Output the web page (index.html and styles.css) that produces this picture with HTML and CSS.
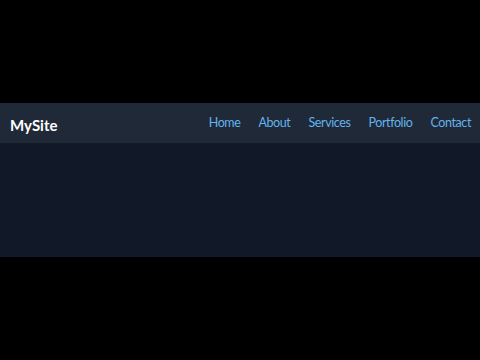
FILE: index.html
```html
<!DOCTYPE html>
<html>
<head>
<meta charset="utf-8">
<link rel="stylesheet" href="styles.css">
</head>
<body>
<div class="page">
  <div class="frame">
    <header class="header">
      <div class="logo">MySite</div>
      <nav class="nav">
        <a class="link">Home</a>
        <a class="link">About</a>
        <a class="link">Services</a>
        <a class="link">Portfolio</a>
        <a class="link">Contact</a>
      </nav>
    </header>
    <main class="content"></main>
  </div>
</div>
</body>
</html>
```
FILE: styles.css
```css
html, body {
  margin: 0;
  padding: 0;
  background: #000;
  width: 480px;
  height: 360px;
  overflow: hidden;
}
.page {
  height: 360px;
  display: flex;
  align-items: center;
}
.frame {
  width: 480px;
  height: 154px;
  display: flex;
  flex-direction: column;
  background: #111827;
}
.header {
  height: 40px;
  background: #1f2937;
  display: flex;
  align-items: center;
  justify-content: space-between;
  padding: 0 9px 0 10px;
  font-family: Lato, "Noto Sans", sans-serif;
}
.logo {
  color: #fff;
  font-weight: 700;
  font-size: 15px;
  margin-top: 3px;
}
.nav {
  display: flex;
  gap: 18px;
  margin-top: -2px;
}
.link {
  color: #63b3ed;
  font-size: 12.5px;
  letter-spacing: -0.4px;
  text-decoration: none;
}
.content {
  flex: 1;
}
```
